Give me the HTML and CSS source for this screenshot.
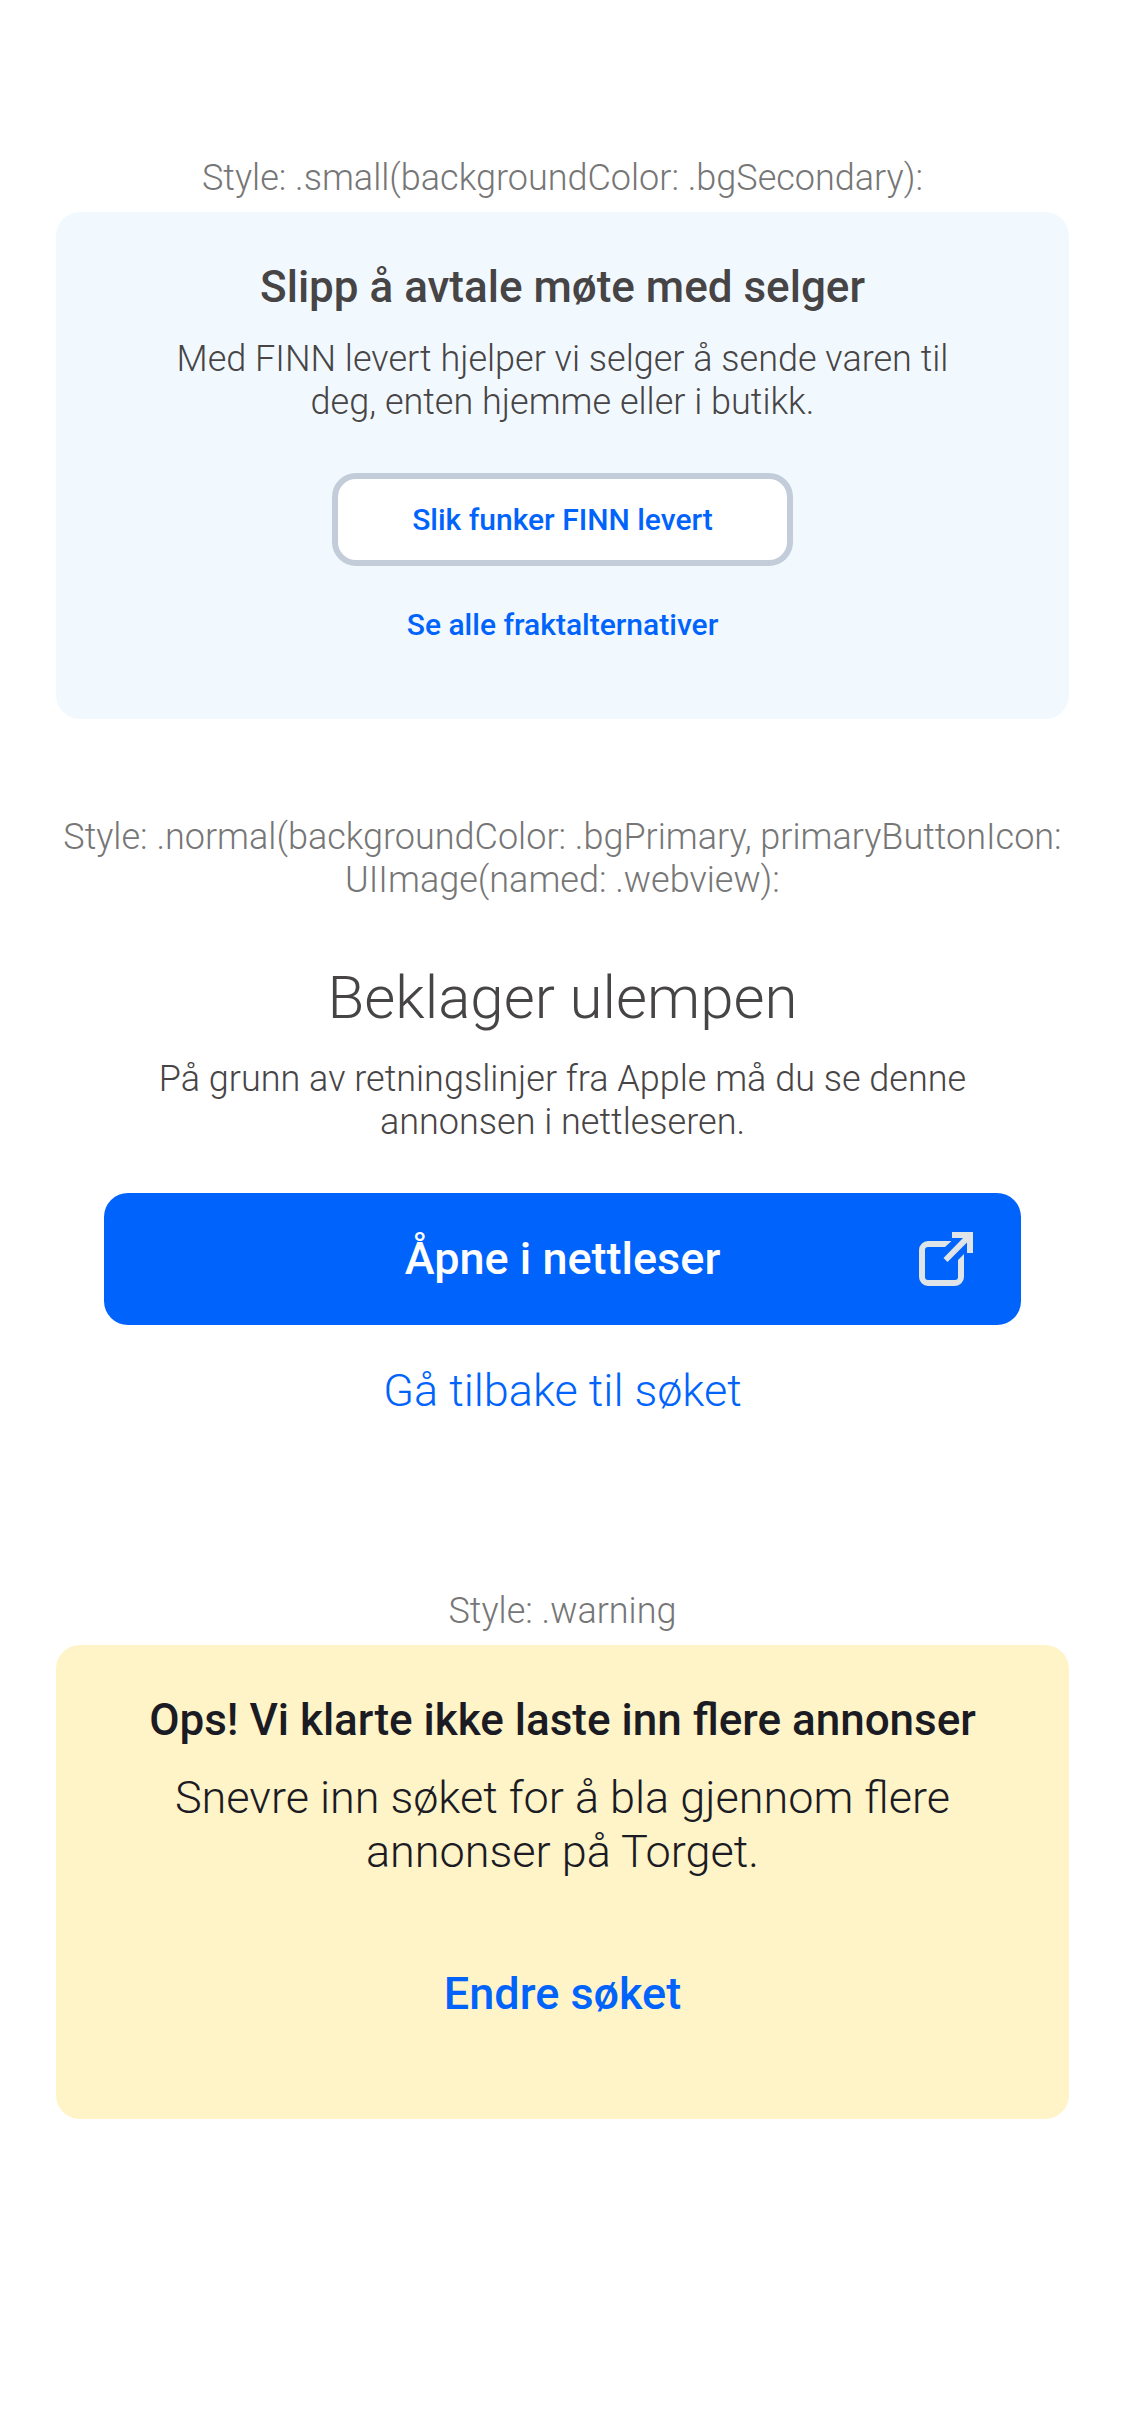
FILE: index.html
```html
<!DOCTYPE html>
<html lang="nb">
<head>
<meta charset="utf-8">
<meta name="viewport" content="width=device-width, initial-scale=1">
<title>Result views</title>
<link rel="stylesheet" href="styles.css">
</head>
<body>
<main class="page">
  <section class="example">
    <p class="caption">Style: .small(backgroundColor: .bgSecondary):</p>
    <div class="panel panel-secondary">
      <h2 class="title">Slipp å avtale møte med selger</h2>
      <p class="body">Med FINN levert hjelper vi selger å sende varen til deg, enten hjemme eller i butikk.</p>
      <div class="actions">
        <button class="button button-outline" type="button">Slik funker FINN levert</button>
        <a class="link link-small" href="#frakt">Se alle fraktalternativer</a>
      </div>
    </div>
  </section>

  <section class="example">
    <p class="caption">Style: .normal(backgroundColor: .bgPrimary, primaryButtonIcon: UIImage(named: .webview):</p>
    <div class="panel">
      <h2 class="title title-large">Beklager ulempen</h2>
      <p class="body">På grunn av retningslinjer fra Apple må du se denne annonsen i nettleseren.</p>
      <div class="actions">
        <button class="button button-filled" type="button">
          <span class="button-label">Åpne i nettleser</span>
          <svg class="button-icon" viewBox="0 0 54 54" aria-hidden="true">
            <path d="M32.500 9H9A9 9 0 0 0 0 18V45A9 9 0 0 0 9 54H36A9 9 0 0 0 45 45V22L39 28V45A3 3 0 0 1 36 48H9A3 3 0 0 1 6 45V18A3 3 0 0 1 9 15H26Z"/>
            <path d="M33 0H54V21H48V10.500L28.500 30L24.500 26L44 6H33Z"/>
          </svg>
        </button>
        <a class="link link-light" href="#sok">Gå tilbake til søket</a>
      </div>
    </div>
  </section>

  <section class="example">
    <p class="caption">Style: .warning</p>
    <div class="panel panel-warning">
      <h2 class="title">Ops! Vi klarte ikke laste inn flere annonser</h2>
      <p class="body body-large">Snevre inn søket for å bla gjennom flere annonser på Torget.</p>
      <div class="actions">
        <button class="button button-flat" type="button">Endre søket</button>
      </div>
    </div>
  </section>
</main>
</body>
</html>
```
FILE: styles.css
```css
* {
  box-sizing: border-box;
}

body {
  margin: 0;
  background: #fff;
  color: #474445;
  font-family: Roboto, "Liberation Sans", sans-serif;
}

h2,
p {
  margin: 0;
}

.page {
  display: flex;
  flex-direction: column;
  gap: 97px;
  padding: 157px 56px;
}

.example {
  display: flex;
  flex-direction: column;
  gap: 12px;
}

.caption {
  color: #767676;
  font-size: 36px;
  font-weight: 300;
  line-height: 43px;
  text-align: center;
}

.panel {
  display: flex;
  flex-direction: column;
  align-items: center;
  gap: 24px;
  padding: 48px;
  border-radius: 24px;
  text-align: center;
}

.panel-secondary {
  background: #f1f9ff;
}

.panel-warning {
  padding-bottom: 59px;
  background: #fff3c8;
  color: #1b1b24;
}

.title {
  font-size: 44px;
  font-weight: 500;
  line-height: 54px;
}

.title-large {
  font-size: 60px;
  font-weight: 300;
  line-height: 72px;
}

.body {
  max-width: 820px;
  font-size: 36px;
  font-weight: 300;
  line-height: 43px;
}

.body-large {
  font-size: 45px;
  line-height: 54px;
}

.actions {
  display: flex;
  flex-direction: column;
  align-items: center;
  align-self: stretch;
  gap: 12px;
  padding-top: 25px;
}

.button {
  border: 0;
  border-radius: 24px;
  font-family: inherit;
  font-weight: 500;
  cursor: pointer;
}

.button-outline {
  padding: 22px 74px;
  border: 6px solid #c3ccd9;
  background: #fff;
  color: #0063fb;
  font-size: 30px;
  line-height: 37px;
}

.button-filled {
  display: grid;
  grid-template-columns: 1fr auto 1fr;
  align-items: center;
  width: 100%;
  padding: 39px 48px;
  background: #0063fb;
  color: #fff;
  font-size: 45px;
  line-height: 54px;
}

.button-label {
  grid-column: 2;
}

.button-icon {
  justify-self: end;
  width: 54px;
  height: 54px;
  fill: #dfe4e8;
}

.button-flat {
  padding: 39px 48px;
  background: transparent;
  color: #0063fb;
  font-size: 45px;
  line-height: 54px;
}

.link {
  color: #0063fb;
  text-decoration: none;
}

.link-small {
  padding: 28px 48px;
  font-size: 30px;
  font-weight: 500;
  line-height: 37px;
}

.link-light {
  padding: 27px 48px;
  font-size: 45px;
  font-weight: 300;
  line-height: 54px;
}
```
